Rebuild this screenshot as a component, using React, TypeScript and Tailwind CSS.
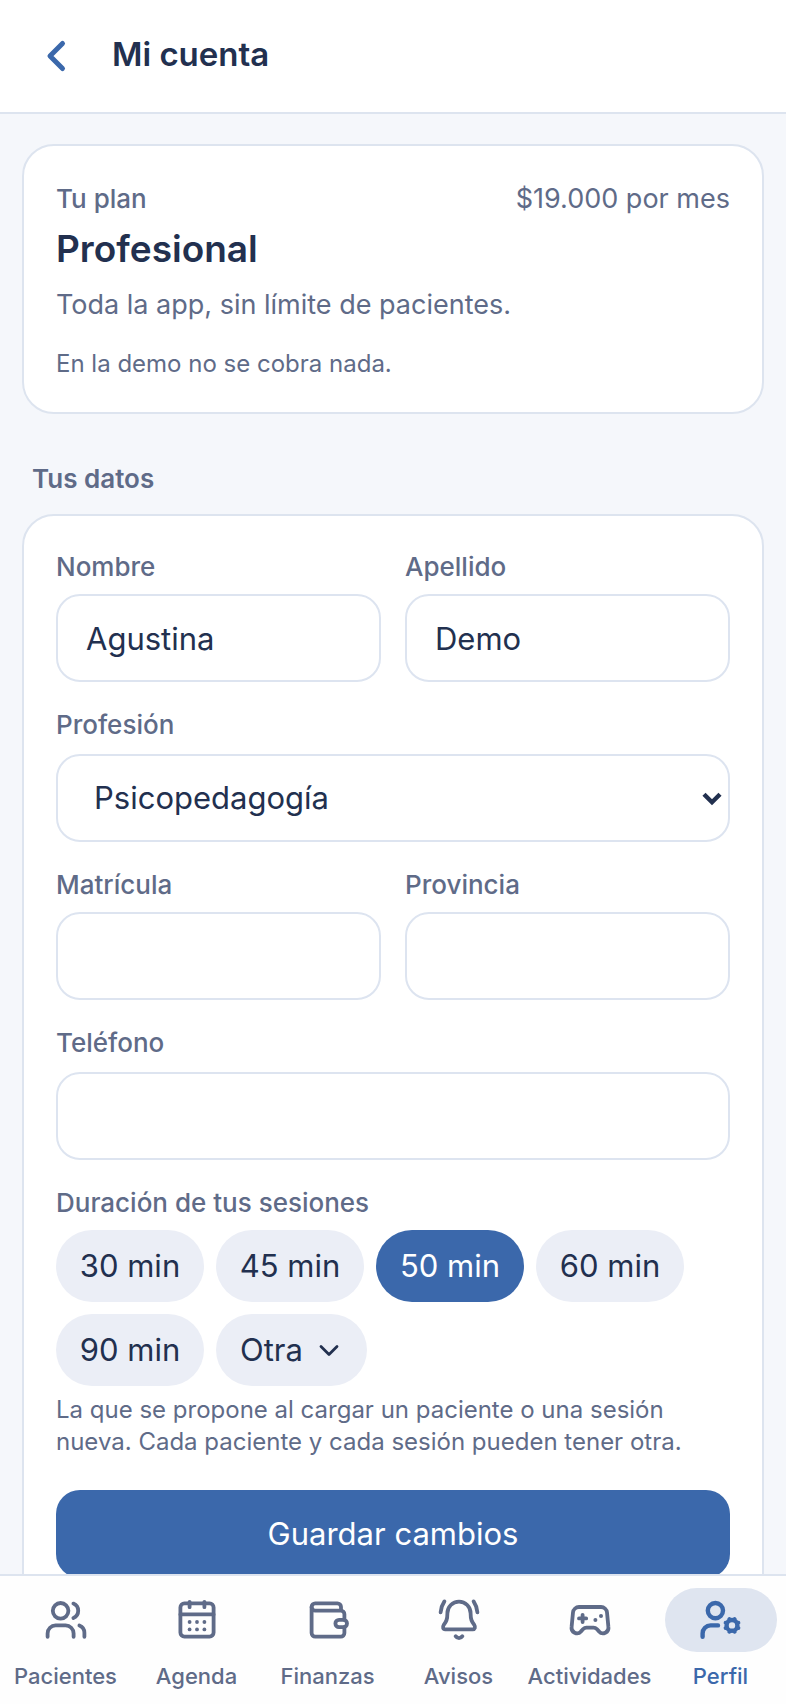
import clsx from 'clsx';
import { useState } from 'react';
import type { InputHTMLAttributes, ReactNode } from 'react';

const DURATIONS = [30, 45, 50, 60, 90];

const PROFESSIONS = ['Psicopedagogía', 'Psicología', 'Fonoaudiología', 'Terapia ocupacional'];

const GEAR_TEETH = [0, 45, 90, 135, 180, 225, 270, 315];

function Icon({ children, strokeWidth = 1.9 }: { children: ReactNode; strokeWidth?: number }) {
  return (
    <svg
      className="h-12 w-12"
      viewBox="0 0 24 24"
      fill="none"
      stroke="currentColor"
      strokeWidth={strokeWidth}
      strokeLinecap="round"
      strokeLinejoin="round"
      aria-hidden="true"
    >
      {children}
    </svg>
  );
}

const NAV_ITEMS = [
  {
    label: 'Pacientes',
    icon: (
      <Icon>
        <circle cx="9.3" cy="7.4" r="3.9" />
        <path d="M2.8 20.4v-1.7a4 4 0 0 1 4-4h5a4 4 0 0 1 4 4v1.7" />
        <path d="M15.7 3.8a3.9 3.9 0 0 1 0 7.2M18.7 14.7a3.9 3.9 0 0 1 2.5 3.7v2" />
      </Icon>
    ),
  },
  {
    label: 'Agenda',
    icon: (
      <Icon>
        <rect x="3.7" y="3.7" width="16.6" height="16.6" rx="2" />
        <path d="M3.7 9.2h16.6M8.3 2.9v2.7M15.7 2.9v2.7" />
        <g fill="currentColor" stroke="none">
          <circle cx="8.3" cy="13" r="0.95" />
          <circle cx="12" cy="13" r="0.95" />
          <circle cx="15.7" cy="13" r="0.95" />
          <circle cx="8.3" cy="16.7" r="0.95" />
          <circle cx="12" cy="16.7" r="0.95" />
          <circle cx="15.7" cy="16.7" r="0.95" />
        </g>
      </Icon>
    ),
  },
  {
    label: 'Finanzas',
    icon: (
      <Icon>
        <path d="M20.2 11.9V9.1a1.8 1.8 0 0 0-1.8-1.8H5.6a1.8 1.8 0 0 1 0-3.6h11.1a1.8 1.8 0 0 1 1.8 1.8v1.8" />
        <path d="M3.8 5.5v13a1.8 1.8 0 0 0 1.8 1.8h12.8a1.8 1.8 0 0 0 1.8-1.8v-2.9" />
        <rect x="15.7" y="11.9" width="5.8" height="3.7" rx="1.8" />
      </Icon>
    ),
  },
  {
    label: 'Avisos',
    icon: (
      <Icon>
        <path d="M12 2.8a5.8 5.8 0 0 0-5.8 5.8c0 3.2-.6 4.2-1.9 6-.6.9-.3 2.1.8 2.1h13.8c1.1 0 1.4-1.2.8-2.1-1.3-1.8-1.9-2.8-1.9-6A5.8 5.8 0 0 0 12 2.8z" />
        <path d="M10.3 20.1c.9 1.3 2.5 1.3 3.4 0M4.7 2.7C3.6 4.3 3 6 2.8 8.2M19.3 2.7c1.1 1.6 1.7 3.3 1.9 5.5" />
      </Icon>
    ),
  },
  {
    label: 'Actividades',
    icon: (
      <Icon>
        <path d="M6.5 5.5h11a3 3 0 0 1 3 2.7l.7 7.3a2.7 2.7 0 0 1-4.7 2.2l-1.1-1.2a2.3 2.3 0 0 0-1.7-.7h-3.4a2.3 2.3 0 0 0-1.7.7l-1.1 1.2a2.7 2.7 0 0 1-4.7-2.2l.7-7.3a3 3 0 0 1 3-2.7z" />
        <path d="M8.3 9.4v3.6M6.5 11.2h3.6" />
        <g fill="currentColor" stroke="none">
          <circle cx="17.5" cy="10" r="1" />
          <circle cx="14.7" cy="12" r="1" />
        </g>
      </Icon>
    ),
  },
  {
    label: 'Perfil',
    icon: (
      <Icon strokeWidth={2.2}>
        <circle cx="9.2" cy="7.3" r="3.8" />
        <path d="M2.8 20.4v-1.7a4 4 0 0 1 4-4h3.7" />
        <circle cx="17.5" cy="14.7" r="2.7" />
        {GEAR_TEETH.map((angle) => (
          <path key={angle} d="M17.5 11.6v-.4" strokeWidth={1.9} transform={`rotate(${angle + 22.5} 17.5 14.7)`} />
        ))}
      </Icon>
    ),
  },
];

interface TextFieldProps extends InputHTMLAttributes<HTMLInputElement> {
  id: string;
  label: string;
  wide?: boolean;
}

function TextField({ id, label, wide, ...props }: TextFieldProps) {
  return (
    <div className={clsx('flex min-w-0 flex-col', wide ? 'gap-2.5' : 'gap-2')}>
      <label htmlFor={id} className="text-[26px] leading-[38px] font-medium text-[#5f6b88]">
        {label}
      </label>
      <input
        id={id}
        className="h-22 w-full rounded-3xl border-2 border-[#dde4f0] bg-white px-7 text-[31px] text-[#22304f] outline-none focus:border-[#3b68ab]"
        {...props}
      />
    </div>
  );
}

export default function App() {
  const [duration, setDuration] = useState(50);
  const [active, setActive] = useState('Perfil');

  return (
    <div className="flex h-screen flex-col bg-[#f5f7fb] font-['Inter',sans-serif] text-[#22304f]">
      <header className="flex h-[114px] shrink-0 items-center gap-6 border-b-2 border-[#dde4ef] bg-white px-6">
        <button type="button" aria-label="Volver" className="flex h-16 w-16 items-center justify-center text-[#3b68ab]">
          <svg className="h-12 w-12" viewBox="0 0 48 48" fill="none" stroke="currentColor" strokeWidth={5} strokeLinecap="round" strokeLinejoin="round">
            <path d="M30.5 11.5 18 24l12.5 12.5" />
          </svg>
        </button>
        <h1 className="pb-1 text-[33px] leading-10 font-semibold">Mi cuenta</h1>
      </header>

      <main className="min-h-0 flex-1 overflow-y-auto px-[22px] pt-[30px] [scrollbar-width:none]">
        {/* Plan */}
        <section className="rounded-[32px] border-2 border-[#dde4ef] bg-white p-8">
          <div className="flex items-center justify-between">
            <h2 className="text-[26px] leading-[42px] font-medium text-[#5f6b88]">Tu plan</h2>
            <p className="text-[27px] leading-[42px] text-[#5f6b88]">$19.000 por mes</p>
          </div>
          <p className="mt-[3px] text-[37px] leading-[52px] font-semibold">Profesional</p>
          <p className="mt-2 text-[27px] leading-[44px] text-[#5f6b88]">Toda la app, sin límite de pacientes.</p>
          <p className="mt-[21px] text-[24px] leading-8 text-[#5f6b88]">En la demo no se cobra nada.</p>
        </section>

        {/* Datos */}
        <h2 className="mt-[46px] px-2.5 text-[26px] leading-[38px] font-semibold text-[#5f6b88]">Tus datos</h2>
        <form
          className="mt-4 flex flex-col rounded-[32px] border-2 border-[#dde4ef] bg-white p-8"
          onSubmit={(e) => e.preventDefault()}
        >
          <div className="flex flex-col gap-6">
            <div className="grid grid-cols-2 gap-6">
              <TextField id="nombre" label="Nombre" defaultValue="Agustina" />
              <TextField id="apellido" label="Apellido" defaultValue="Demo" />
            </div>

            <div className="flex flex-col gap-2.5">
              <label htmlFor="profesion" className="text-[26px] leading-[38px] font-medium text-[#5f6b88]">
                Profesión
              </label>
              <div className="relative">
                <select
                  id="profesion"
                  className="h-22 w-full appearance-none rounded-3xl border-2 border-[#dde4f0] bg-white px-9 text-[31px] text-[#22304f] outline-none"
                >
                  {PROFESSIONS.map((p) => (
                    <option key={p}>{p}</option>
                  ))}
                </select>
                <svg
                  className="pointer-events-none absolute top-1/2 right-2 h-5 w-5 -translate-y-1/2"
                  viewBox="0 0 20 20"
                  fill="none"
                  stroke="currentColor"
                  strokeWidth={4.4}
                >
                  <path d="M2 6.2 10 14.2l8-8" />
                </svg>
              </div>
            </div>

            <div className="grid grid-cols-2 gap-6">
              <TextField id="matricula" label="Matrícula" />
              <TextField id="provincia" label="Provincia" />
            </div>

            <TextField id="telefono" label="Teléfono" type="tel" wide />

            <div>
              <h3 id="duracion" className="text-[26px] leading-[38px] font-medium text-[#5f6b88]">
                Duración de tus sesiones
              </h3>
              <div role="group" aria-labelledby="duracion" className="mt-2 flex flex-wrap gap-3">
                {DURATIONS.map((min) => (
                  <button
                    key={min}
                    type="button"
                    aria-pressed={duration === min}
                    onClick={() => setDuration(min)}
                    className={clsx(
                      'h-18 min-w-[148px] rounded-full px-5 text-[31px]',
                      duration === min ? 'bg-[#3b68ab] text-white' : 'bg-[#ebeef6]'
                    )}
                  >
                    {min} min
                  </button>
                ))}
                <button type="button" className="flex h-18 items-center gap-3 rounded-full bg-[#ebeef6] px-6 text-[31px]">
                  Otra
                  <svg className="h-7 w-7" viewBox="0 0 28 28" fill="none" stroke="currentColor" strokeWidth={2.8} strokeLinecap="round" strokeLinejoin="round">
                    <path d="m6 10.5 8 8 8-8" />
                  </svg>
                </button>
              </div>
              <p className="mt-2 text-[24px] leading-8 text-[#5f6b88]">
                La que se propone al cargar un paciente o una sesión nueva. Cada paciente y cada sesión pueden tener otra.
              </p>
            </div>
          </div>

          <button type="submit" className="mt-8 h-22 rounded-3xl bg-[#3b68ab] text-[31px] text-white">
            Guardar cambios
          </button>
        </form>
      </main>

      <nav className="grid shrink-0 grid-cols-6 border-t-2 border-[#dde4ef] bg-[#fefefe] pt-3 pb-3">
        {NAV_ITEMS.map((item) => (
          <a
            key={item.label}
            href={`#${item.label.toLowerCase()}`}
            onClick={() => setActive(item.label)}
            aria-current={active === item.label ? 'page' : undefined}
            className={clsx('flex flex-col items-center gap-2', active === item.label ? 'text-[#3b68ab]' : 'text-[#5f6b88]')}
          >
            <span
              className={clsx(
                'flex h-16 w-28 items-center justify-center rounded-full',
                active === item.label && 'bg-[#dfe5f0]'
              )}
            >
              {item.icon}
            </span>
            <span className="text-[22px] leading-8 font-medium">{item.label}</span>
          </a>
        ))}
      </nav>
    </div>
  );
}
